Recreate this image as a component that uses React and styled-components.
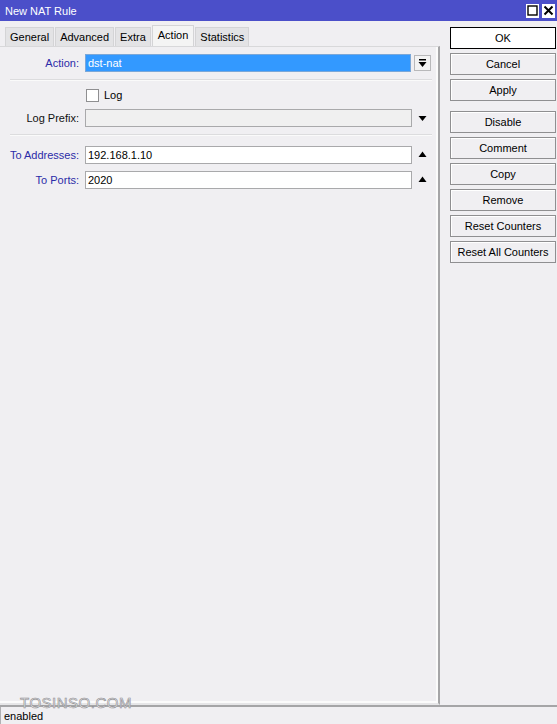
import React, { useState } from "react";
import styled, { createGlobalStyle } from "styled-components";

const GlobalStyle = createGlobalStyle`
  html, body { margin: 0; padding: 0; background: #f0eff2; }
  body { font-family: "Liberation Sans", Arial, sans-serif; }
`;

const Window = styled.div`
  position: relative;
  width: 557px;
  height: 724px;
  display: flex;
  flex-direction: column;
  background: #f0eff2;
  font-family: "Liberation Sans", Arial, sans-serif;
  font-size: 11px;
  color: #000;
  overflow: hidden;
`;

const TitleBar = styled.div`
  height: 21px;
  flex: none;
  display: flex;
  align-items: center;
  justify-content: space-between;
  background: #4b4fc9;
  color: #fff;
  padding: 0 2px 0 5px;
  font-size: 11px;
`;

const TitleButtons = styled.div`
  display: flex;
  gap: 3px;
  align-items: center;
`;

const TitleButton = styled.div`
  width: 13px;
  height: 14px;
  background: #fff;
  display: flex;
  align-items: center;
  justify-content: center;
`;

const Body = styled.div`
  flex: 1;
  display: flex;
  min-height: 0;
`;

const Main = styled.div`
  width: 440px;
  display: flex;
  flex-direction: column;
`;

const Tabs = styled.div`
  display: flex;
  height: 21px;
  margin-top: 4px;
  padding-left: 5px;
  align-items: flex-end;
`;

const Tab = styled.div`
  height: ${p => (p.$active ? "21px" : "19px")};
  box-sizing: border-box;
  padding: 0 ${p => (p.$active ? "5px" : "4px")};
  display: flex;
  align-items: center;
  background: ${p => (p.$active ? "#f4f4f4" : "#e3e3e5")};
  border: 1px solid #d4d4d6;
  border-bottom: none;
  margin-right: 1px;
  padding-bottom: ${p => (p.$active ? "3px" : "0")};
`;

const Panel = styled.div`
  flex: 1;
  border-top: 1px solid #d8d8da;
  border-right: 2px solid #a5a5a7;
  border-bottom: 2px solid #e6e6e8;
  box-shadow: inset -2px 0 0 #fbfbfb, inset 0 -2px 0 #fbfbfb;
  padding: 7px 0 0 0;
`;

const Row = styled.div`
  display: flex;
  align-items: center;
  height: ${p => p.$h || 25}px;
`;

const Label = styled.div`
  width: 79px;
  text-align: right;
  padding-right: 6px;
  color: ${p => (p.$blue ? "#2b2ba8" : "#111")};
  flex: none;
`;

const Field = styled.div`
  width: ${p => p.$w || 327}px;
  height: 18px;
  box-sizing: border-box;
  border: 1px solid ${p => (p.$selected ? "#7aa7d8" : "#a9a9ab")};
  background: ${p => (p.$selected ? "#3399ff" : p.$disabled ? "#f0f0f0" : "#fff")};
  color: ${p => (p.$selected ? "#fff" : "#000")};
  padding-left: 2px;
  display: flex;
  align-items: center;
  font-size: 11px;
`;

const ArrowButton = styled.div`
  width: 17px;
  height: 16px;
  box-sizing: border-box;
  border: ${p => (p.$boxed ? "1px solid #b8b8ba" : "none")};
  background: ${p => (p.$boxed ? "#f3f3f3" : "transparent")};
  display: flex;
  align-items: center;
  justify-content: center;
  margin-left: ${p => (p.$boxed ? "3px" : "2px")};
`;

const Separator = styled.div`
  height: 1px;
  margin: ${p => p.$m || "5px 6px 5px 10px"};
  background: #dcdcde;
  border-bottom: 1px solid #fafafa;
`;

const CheckRow = styled.label`
  display: flex;
  align-items: center;
  gap: 5px;
  padding-left: 86px;
  height: 22px;
`;

const CheckBox = styled.span`
  width: 11px;
  height: 11px;
  border: 1px solid #8f8f91;
  background: #fff;
  display: inline-block;
`;

const Buttons = styled.div`
  display: flex;
  flex-direction: column;
  padding: 6px 0 0 10px;
  gap: 4px;
`;

const Button = styled.div`
  width: 106px;
  height: 22px;
  box-sizing: border-box;
  border: 1px solid ${p => (p.$focus ? "#000" : "#8f8f91")};
  background: ${p => (p.$focus ? "#fff" : "#f0eff2")};
  box-shadow: ${p => (p.$focus ? "none" : "inset 1px 1px 0 #fff")};
  display: flex;
  align-items: center;
  justify-content: center;
  margin-bottom: ${p => (p.$gap ? "6px" : "0")};
  font-size: 11px;
`;

const StatusBar = styled.div`
  height: 17px;
  flex: none;
  border-top: 2px solid #a5a5a7;
  display: flex;
  align-items: center;
`;

const StatusCell = styled.div`
  padding: 0 4px 0 3px;
  border-left: 1px solid #b0b0b2;
  height: 100%;
  display: flex;
  align-items: center;
`;

const Watermark = styled.div`
  position: absolute;
  left: 20px;
  bottom: 13px;
  font-size: 15px;
  letter-spacing: 0.5px;
  color: #f0eff2;
  -webkit-text-stroke: 0.6px #8d8d90;
  font-family: "Liberation Sans", Arial, sans-serif;
`;

const DownArrow = ({ bar }) => (
  <svg width="9" height="9" viewBox="0 0 9 9">
    {bar && <rect x="1" y="0" width="7" height="1.5" fill="#000" />}
    <polygon points="0.5,3 8.5,3 4.5,8" fill="#000" />
  </svg>
);

const UpArrow = () => (
  <svg width="9" height="7" viewBox="0 0 9 7">
    <polygon points="0.5,6 8.5,6 4.5,0.5" fill="#000" />
  </svg>
);

const tabs = ["General", "Advanced", "Extra", "Action", "Statistics"];
const buttons = [
  { t: "OK", focus: true },
  { t: "Cancel" },
  { t: "Apply", gap: true },
  { t: "Disable" },
  { t: "Comment" },
  { t: "Copy" },
  { t: "Remove" },
  { t: "Reset Counters" },
  { t: "Reset All Counters" },
];

export default function App() {
  const [active] = useState("Action");
  return (
    <Window>
      <GlobalStyle />
      <TitleBar>
        <span>New NAT Rule</span>
        <TitleButtons>
          <TitleButton>
            <svg width="11" height="11" viewBox="0 0 11 11">
              <rect x="1" y="1" width="9" height="9" fill="none" stroke="#000" strokeWidth="1.4" />
            </svg>
          </TitleButton>
          <TitleButton>
            <svg width="11" height="11" viewBox="0 0 11 11">
              <path d="M1.5 1.5 L9.5 9.5 M9.5 1.5 L1.5 9.5" stroke="#000" strokeWidth="2" />
            </svg>
          </TitleButton>
        </TitleButtons>
      </TitleBar>
      <Body>
        <Main>
          <Tabs>
            {tabs.map(t => (
              <Tab key={t} $active={t === active}>{t}</Tab>
            ))}
          </Tabs>
          <Panel>
            <Row $h={18}>
              <Label $blue>Action:</Label>
              <Field $selected $w={326}>dst-nat</Field>
              <ArrowButton $boxed><DownArrow bar /></ArrowButton>
            </Row>
            <Separator $m="7px 6px 3px 10px" />
            <CheckRow>
              <CheckBox />
              <span>Log</span>
            </CheckRow>
            <Row $h={23}>
              <Label>Log Prefix:</Label>
              <Field $disabled>&nbsp;</Field>
              <ArrowButton><DownArrow /></ArrowButton>
            </Row>
            <Separator $m="5px 6px 6px 10px" />
            <Row>
              <Label $blue>To Addresses:</Label>
              <Field>192.168.1.10</Field>
              <ArrowButton><UpArrow /></ArrowButton>
            </Row>
            <Row>
              <Label $blue>To Ports:</Label>
              <Field>2020</Field>
              <ArrowButton><UpArrow /></ArrowButton>
            </Row>
          </Panel>
        </Main>
        <Buttons>
          {buttons.map(b => (
            <Button key={b.t} $focus={b.focus} $gap={b.gap}>{b.t}</Button>
          ))}
        </Buttons>
      </Body>
      <StatusBar>
        <StatusCell>enabled</StatusCell>
      </StatusBar>
      <Watermark>TOSINSO.COM</Watermark>
    </Window>
  );
}
